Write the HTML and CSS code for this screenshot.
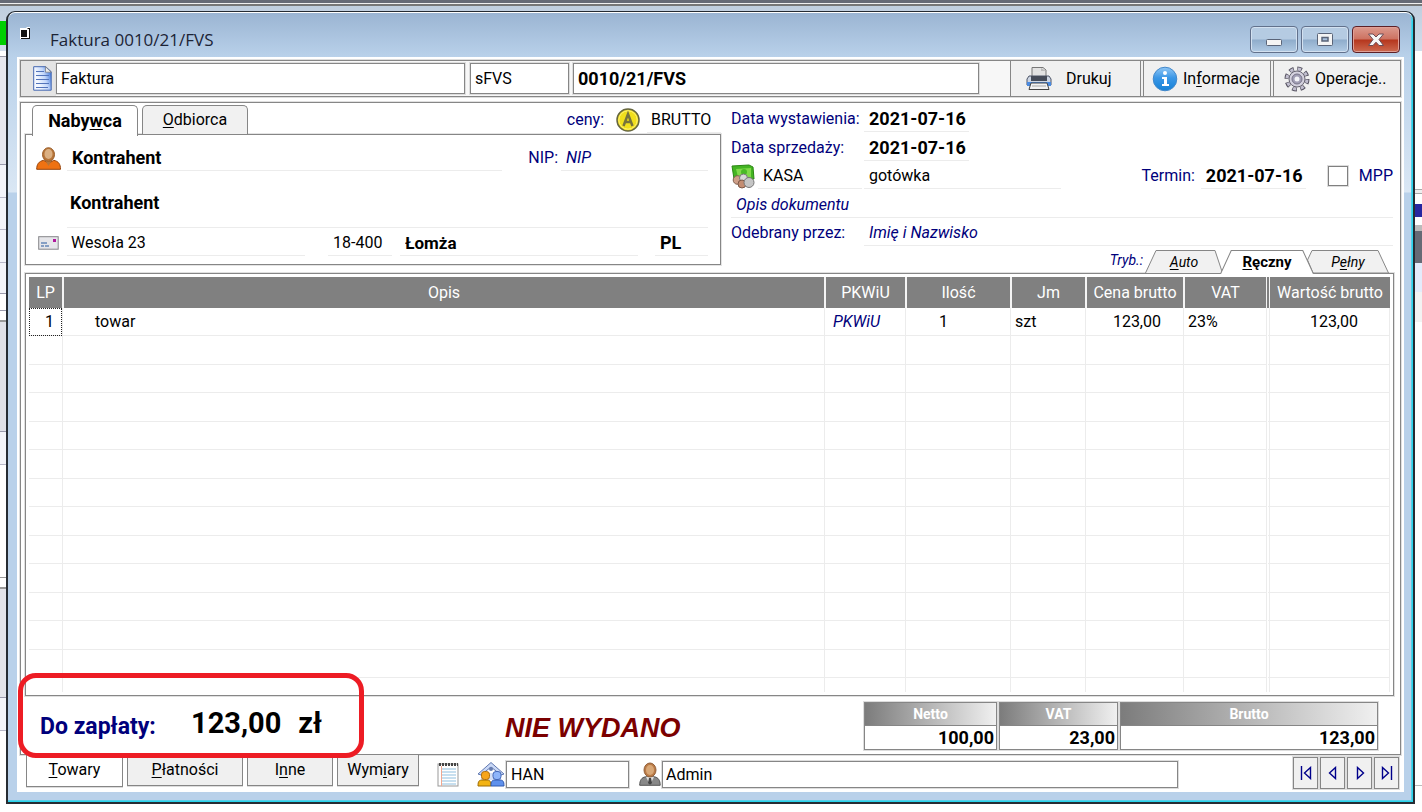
FILE: index.html
```html
<!DOCTYPE html>
<html lang="pl">
<head>
<meta charset="utf-8">
<title>Faktura 0010/21/FVS</title>
<link rel="stylesheet" href="styles.css">
</head>
<body>
<div class="desk-left"><span class="desk-badge"></span></div>
<div class="desk-right"></div>
<main class="window">
  <header class="titlebar">
    <svg class="app-icon" width="12" height="13" viewBox="0 0 12 13"><path d="M0 1h6l1-1h3v12H0z" fill="#fff"/><path d="M1 3h6v7H1zM8 2h1v9H1v1h9V1H7z" fill="#111"/></svg>
    <h1 class="title">Faktura 0010/21/FVS</h1>
    <div class="win-buttons">
      <button class="win-btn" aria-label="Minimalizuj"><svg width="18" height="14" viewBox="0 0 18 14"><rect x="1.5" y="6.500" width="15" height="6" rx="1" fill="#f4f4f4" stroke="#5a6478"/></svg></button>
      <button class="win-btn" aria-label="Maksymalizuj"><svg width="18" height="14" viewBox="0 0 18 14"><rect x="1.500" y=".5" width="15" height="12" rx="1" fill="#f4f4f4" stroke="#5a6478"/><rect x="6" y="4.500" width="6" height="3.500" fill="#a8c0dc" stroke="#5a6478" stroke-width="1.500"/></svg></button>
      <button class="win-btn close" aria-label="Zamknij"><svg width="18" height="14" viewBox="0 0 18 14"><path d="M1.500 1h4.500l3 3 3-3h4.500l-4.500 5.500 4.500 6H12l-3-3.300-3 3.300H1.500l4.500-6z" fill="#f6f6f6" stroke="#6b4b55"/></svg></button>
    </div>
  </header>

  <div class="client">
    <div class="toolbar">
      <span class="doc-icon"><svg width="19" height="25" viewBox="0 0 19 25"><defs><linearGradient id="doc" x1="0" x2="1" y1=".6" y2=".2"><stop offset=".2" stop-color="#f4f8ff"/><stop offset=".6" stop-color="#c3d7fa"/><stop offset="1" stop-color="#3a72d8"/></linearGradient></defs><path d="M.7.7h12l5.500 5v18.500H.7z" fill="url(#doc)" stroke="#4568b0"/><path d="M12.500.7v5.500h5.700z" fill="#eee" stroke="#777" stroke-width=".7"/><path d="M3 5.500h8M3 9.500h13M3 13.500h13M3 17.500h13M3 21.500h12" stroke="#5374ba"/></svg></span>
      <input class="box w-type" aria-label="Typ dokumentu" value="Faktura">
      <input class="box w-symbol" aria-label="Symbol" value="sFVS">
      <input class="box w-number bold" aria-label="Numer" value="0010/21/FVS">
      <span class="toolbar-gap"></span>
      <button class="tool"><svg width="26" height="25" viewBox="0 0 26 25"><path d="M6 11V1.500h11L20 4v7z" fill="#e2e2e2" stroke="#777"/><path d="M15 2v3h5" fill="#bbb"/><path d="M3 10h20l2 3v6H1v-6z" fill="#cdd5e2" stroke="#4d5568"/><path d="M5 10h16v5H5z" fill="#454b58"/><path d="M1 16h24v4H1z" fill="#4a8ae0"/><path d="M5 17h16l2 6.500H3z" fill="#f2f2f2" stroke="#444"/><path d="M6 20h14" stroke="#ccc" stroke-width="2"/></svg><span>Drukuj</span></button>
      <button class="tool tight"><svg width="26" height="26" viewBox="0 0 26 26"><defs><linearGradient id="inf" x2="0" y2="1"><stop offset="0" stop-color="#8fc6f5"/><stop offset=".45" stop-color="#3b97e6"/><stop offset="1" stop-color="#1581d6"/></linearGradient></defs><circle cx="13" cy="13" r="11.800" fill="url(#inf)" stroke="#4288cb"/><circle cx="13" cy="7" r="2" fill="#fff"/><path d="M10 11h5v7h2v2h-7v-2h2v-5h-2z" fill="#fff"/></svg><span>In<u>f</u>ormacje</span></button>
      <button class="tool tight"><svg width="26" height="26" viewBox="0 0 26 26"><circle cx="13" cy="13" r="10.500" fill="none" stroke="#555260" stroke-width="4" stroke-dasharray="4.700 3.550"/><circle cx="13" cy="13" r="10" fill="none" stroke="#c2bfd0" stroke-width="3" stroke-dasharray="3.100 4.750" stroke-dashoffset="-.7"/><circle cx="13" cy="13" r="8" fill="#d4d1de" stroke="#666370"/><circle cx="13" cy="13" r="5" fill="#a29fb5" stroke="#777489"/><circle cx="13" cy="13" r="2.500" fill="#f3f3f7"/></svg><span>Operacje..</span></button>
    </div>

    <section class="panel">
      <div class="top">
        <div class="buyer">
          <div class="buyer-head">
            <div class="tabs" role="tablist">
              <button class="tab active" role="tab" aria-selected="true">Naby<u>w</u>ca</button>
              <button class="tab" role="tab"><u>O</u>dbiorca</button>
            </div>
            <label class="lbl" for="ceny">ceny:</label>
            <svg class="coin" width="24" height="24" viewBox="0 0 24 24"><circle cx="12" cy="12" r="11" fill="#f1df1c" stroke="#666640" stroke-width="1.500"/><circle cx="12" cy="12" r="9.200" fill="none" stroke="#fff27a"/><path d="M7.500 18 12 6l4.500 12M9 14h6" fill="none" stroke="#77733c" stroke-width="2.500"/></svg>
            <input class="line w-ceny" id="ceny" value="BRUTTO">
          </div>
          <div class="buyer-box">
            <div class="brow first">
              <span class="ico"><svg width="25" height="23" viewBox="0 0 25 23"><path d="M.7 22.300c0-5 2-8 7-9l5 3 5-3c5 1 6.800 4 6.800 9z" fill="#ef7212" stroke="#97440c"/><path d="m9 13 3.500 6 3.500-6z" fill="#b5763a"/><ellipse cx="12.500" cy="7.500" rx="6" ry="6.800" fill="#b8763a" stroke="#9b5d28"/><ellipse cx="12.500" cy="7" rx="4" ry="5" fill="#dbb083"/></svg></span>
              <input class="line grow bold" aria-label="Skrót" value="Kontrahent">
              <label class="lbl nip" for="nip">NIP:</label>
              <input class="line w-nip" id="nip" placeholder="NIP">
            </div>
            <div class="brow second"><input class="line grow bold" aria-label="Nazwa" value="Kontrahent"></div>
            <div class="brow third">
              <span class="ico"><svg width="21" height="14" viewBox="0 0 21 14"><rect x=".7" y=".7" width="19.500" height="12.500" fill="#e6e6ea" stroke="#858589"/><path d="M3 7h6M3 10h3M7 10h4" stroke="#6788b8" stroke-width="1.500"/><path d="M15 3h3v3h-3z" fill="#b0189c"/></svg></span>
              <input class="line w-street" aria-label="Ulica" value="Wesoła 23">
              <input class="line w-zip" aria-label="Kod" value="18-400">
              <input class="line grow bold small" aria-label="Miasto" value="Łomża">
              <input class="line w-country bold" aria-label="Kraj" value="PL">
            </div>
          </div>
        </div>

        <div class="details">
          <div class="drow"><label class="lbl w-label" for="d1">Data wystawienia:</label><input class="line w-date bold" id="d1" value="2021-07-16"></div>
          <div class="drow"><label class="lbl w-label" for="d2">Data sprzedaży:</label><input class="line w-date bold" id="d2" value="2021-07-16"></div>
          <div class="drow">
            <svg class="cash" width="24" height="25" viewBox="0 0 24 25"><path d="m1 2 17-1 4 2 1 12H3z" fill="#43b522" stroke="#2b8713"/><path d="m5 5 15-1v9H7z" fill="#81da4a"/><circle cx="13" cy="8" r="3" fill="#4aba27"/><circle cx="6.500" cy="16" r="4.300" fill="#cf9f88" stroke="#80604f"/><circle cx="12.500" cy="14" r="4" fill="#d9d9d9" stroke="#777"/><circle cx="11" cy="20" r="4" fill="#c48d72" stroke="#7c5947"/><circle cx="18" cy="18.500" r="5" fill="#c5c5c5" stroke="#777"/></svg>
            <input class="line w-kasa" aria-label="Kasa" value="KASA">
            <input class="line w-pay" aria-label="Forma płatności" value="gotówka">
            <label class="lbl term" for="d3">Termin:</label><input class="line w-date bold" id="d3" value="2021-07-16">
            <label class="lbl mpp"><input type="checkbox" class="check">MPP</label>
          </div>
          <div class="drow"><input class="line grow" aria-label="Opis dokumentu" placeholder="Opis dokumentu"></div>
          <div class="drow"><label class="lbl w-label" for="rec">Odebrany przez:</label><input class="line grow" id="rec" placeholder="Imię i Nazwisko"></div>
          <div class="modes" role="tablist">
            <span class="mode-label">Tryb.:</span>
            <button class="mode m-auto" role="tab"><svg class="shape" viewBox="0 0 78 23" preserveAspectRatio="none"><path d="M.5 23 11 .5h59L77.500 23"/></svg><span><u>A</u>uto</span></button>
            <button class="mode m-hand active" role="tab" aria-selected="true"><svg class="shape" viewBox="0 0 92 24" preserveAspectRatio="none"><path d="M.5 24 11 .5h70L91.500 24"/></svg><span><u>R</u>ęczny</span></button>
            <button class="mode m-full" role="tab"><svg class="shape" viewBox="0 0 82 23" preserveAspectRatio="none"><path d="M.5 10 5 .5h66L81.500 23H6z"/></svg><span>P<u>e</u>łny</span></button>
          </div>
        </div>
      </div>

      <div class="grid-box">
        <table class="grid">
          <colgroup><col class="c-lp"><col><col class="c-pk"><col class="c-il"><col class="c-jm"><col class="c-ce"><col class="c-va"><col class="c-wa"></colgroup>
          <thead><tr><th>LP</th><th>Opis</th><th>PKWiU</th><th>Ilość</th><th>Jm</th><th>Cena brutto</th><th>VAT</th><th>Wartość brutto</th></tr></thead>
          <tbody>
            <tr><td class="focus">1</td><td class="desc">towar</td><td class="pk">PKWiU</td><td class="qty">1</td><td>szt</td><td class="num">123,00</td><td>23%</td><td class="num last">123,00</td></tr>
            <tr><td></td><td></td><td></td><td></td><td></td><td></td><td></td><td></td></tr>
            <tr><td></td><td></td><td></td><td></td><td></td><td></td><td></td><td></td></tr>
            <tr><td></td><td></td><td></td><td></td><td></td><td></td><td></td><td></td></tr>
            <tr><td></td><td></td><td></td><td></td><td></td><td></td><td></td><td></td></tr>
            <tr><td></td><td></td><td></td><td></td><td></td><td></td><td></td><td></td></tr>
            <tr><td></td><td></td><td></td><td></td><td></td><td></td><td></td><td></td></tr>
            <tr><td></td><td></td><td></td><td></td><td></td><td></td><td></td><td></td></tr>
            <tr><td></td><td></td><td></td><td></td><td></td><td></td><td></td><td></td></tr>
            <tr><td></td><td></td><td></td><td></td><td></td><td></td><td></td><td></td></tr>
            <tr><td></td><td></td><td></td><td></td><td></td><td></td><td></td><td></td></tr>
            <tr><td></td><td></td><td></td><td></td><td></td><td></td><td></td><td></td></tr>
            <tr><td></td><td></td><td></td><td></td><td></td><td></td><td></td><td></td></tr>
            <tr class="rest"><td></td><td></td><td></td><td></td><td></td><td></td><td></td><td></td></tr>
          </tbody>
        </table>
      </div>

      <div class="summary">
        <span class="due-label">Do zapłaty:</span>
        <span class="due">123,00</span><span class="due cur">zł</span>
        <span class="status">NIE WYDANO</span>
        <dl class="totals">
          <div class="total t-net"><dt>Netto</dt><dd>100,00</dd></div>
          <div class="total t-vat"><dt>VAT</dt><dd>23,00</dd></div>
          <div class="total t-gross"><dt>Brutto</dt><dd>123,00</dd></div>
        </dl>
        <span class="marker"></span>
      </div>
    </section>

    <footer class="bottom">
      <button class="btab b1 active"><u>T</u>owary</button>
      <button class="btab b2"><u>P</u>łatności</button>
      <button class="btab b3">I<u>n</u>ne</button>
      <button class="btab b4">Wym<u>i</u>ary</button>
      <svg class="note" width="22" height="25" viewBox="0 0 22 25"><rect x="1" y="2" width="20" height="22" fill="#fff" stroke="#999"/><path d="M2 2.500h19" stroke="#444" stroke-width="3" stroke-dasharray="2 1"/><path d="M5 7h14M5 10h14M5 13h14M5 16h14M5 19h14M5 22h14" stroke="#b5d5ea" stroke-width="1.500"/><path d="M4.500 4v20" stroke="#f1a78f"/></svg>
      <svg class="house" width="28" height="26" viewBox="0 0 28 26"><path d="M4 12v7h20v-7" fill="#d5dff5"/><path d="m1 13 13-11.500L27 13l-3 1L14 6 4 14z" fill="#c9d8f6" stroke="#6078b0"/><circle cx="14" cy="8" r="2" fill="#667db0"/><path d="M1 25c0-5 1-6 5-6h3c4 0 5 1 5 6z" fill="#f3b313" stroke="#9d6c05"/><rect x="4.500" y="10.500" width="8" height="8" rx="3" fill="#f6a51b" stroke="#ae6e0d"/><path d="M14 25c0-5 1-6 5-6h3c4 0 5 1 5 6z" fill="#5e90ec" stroke="#315ab0"/><rect x="16" y="10.500" width="8" height="8" rx="3" fill="#8eb5fa" stroke="#4468b8"/></svg>
      <input class="box w-han" aria-label="Magazyn" value="HAN">
      <svg class="user" width="22" height="24" viewBox="0 0 22 24"><path d="M.7 23.300c0-5 2-8 6-8.500h8.500c4 .5 6 3.500 6 8.500z" fill="#888" stroke="#555"/><path d="m7 15 4 8 4-8z" fill="#ddd"/><path d="m10 16h2l1 5-2 2-2-2z" fill="#444"/><ellipse cx="11" cy="8" rx="6" ry="7" fill="#ba7b47" stroke="#936039"/><ellipse cx="11" cy="8" rx="4" ry="5" fill="#d9a877"/></svg>
      <input class="box w-admin" aria-label="Operator" value="Admin">
      <div class="nav">
        <button class="nav-btn" aria-label="Pierwszy"><svg width="12" height="14" viewBox="0 0 12 14"><path d="M1.500 0v14M10.500 1.500v11L4.500 7z"/></svg></button>
        <button class="nav-btn" aria-label="Poprzedni"><svg width="12" height="14" viewBox="0 0 12 14"><path d="M8.500 1.500v11L2.500 7z"/></svg></button>
        <button class="nav-btn" aria-label="Następny"><svg width="12" height="14" viewBox="0 0 12 14"><path d="M3.500 1.500v11l6-5.500z"/></svg></button>
        <button class="nav-btn" aria-label="Ostatni"><svg width="12" height="14" viewBox="0 0 12 14"><path d="M10.500 0v14M1.500 1.500v11l6-5.500z"/></svg></button>
      </div>
    </footer>
  </div>
</main>
</body>
</html>
```

FILE: styles.css
```css
* { box-sizing: border-box; }
:root { --navy: #00007b; --edge: #868686; --rule: #ececec; }
body {
  margin: 0;
  min-height: 100vh;
  padding: 11px 7px 9px 6px;
  display: flex;
  position: relative;
  font: 16px/20px Roboto, "Liberation Sans", sans-serif;
  color: #000;
  background: linear-gradient(#666a75 0 3px, #f0f0f0 3px 4px, #777 4px 6px, #c0cede 6px, #d2deec 51px, #fff 51px 100%);
}
button, input { font: inherit; color: inherit; margin: 0; padding: 0; }
u { text-underline-offset: 2px; }

/* Neighbouring windows visible around the frame */
.desk-left {
  position: absolute; left: 0; top: 56px; bottom: 0; width: 8px;
  background: linear-gradient(#9a9aa8 0 1px, #e6e7ee 1px 108px, #9a9aac 108px 109px, #f3f4f9 109px 141px, #b8b8c8 141px 142px, #f3f4f9 142px 173px, #b8b8c8 173px 174px, #f3f4f9 174px 206px, #b8b8c8 206px 207px, #f3f4f9 207px 237px, #9a9aac 237px 238px, #fff 238px 254px, #9a9aac 254px 255px, #fff 255px 264px, #999 264px 266px, #e0e1e8 266px 375px, #9a9aac 375px 376px, #f3f4f9 376px 408px, #b8b8c8 408px 409px, #fff 409px 521px, #999 521px 522px, #fff 522px 531px, #999 531px 533px, #e3e4ea 533px 641px, #9a9aac 641px 642px, #f3f4f9 642px 674px, #b8b8c8 674px 675px, #fff 675px);
}
.desk-badge { position: absolute; left: 0; top: -35px; width: 6px; height: 24px; background: #00d000; }
.desk-right {
  position: absolute; right: 0; top: 189px; bottom: 0; width: 8px;
  background: linear-gradient(#aaa 0 1px, #eee 1px 4px, #aaa 4px 5px, #fff 5px 15px, #2727a0 15px 28px, #fff 28px 36px, #bbb 36px 42px, #666a75 42px 74px, #e4ecfb 74px 103px, #f3f3f3 103px 133px, #fff 133px 596px, #bbb 596px 597px, #fff 597px);
}

.window {
  position: relative;
  flex: 1;
  display: flex;
  flex-direction: column;
  padding: 0 9px 10px;
  border: 2px solid #262c33;
  border-top-width: 1px;
  border-radius: 9px 9px 0 0;
  box-shadow: inset 0 1px #fff, inset -1px -1px #28d4ec, inset -2px -2px #55cfe8;
  background: linear-gradient(#9ab4d2 0, #b9d1ea 45px, #dae7f4 180px, #b9d1ea 181px);
}
.titlebar { height: 45px; display: flex; align-items: flex-start; }
.app-icon { margin: 15px 0 0 3px; }
.title { margin: 17px auto 0 18px; font: 17px/22px "Open Sans", "Noto Sans", sans-serif; color: #1c2436; }
.win-buttons { display: flex; gap: 3px; padding: 14px 4px 0 0; }
.win-btn {
  width: 48px; height: 27px; display: grid; place-items: center;
  border: 1px solid #62718c; border-radius: 4px;
  box-shadow: inset 0 0 0 1px #d3e1f0;
  background: linear-gradient(#b5cbe2 0 48%, #8faccb 52%, #b1cae4);
}
.win-btn.close { border-color: #5d2026; box-shadow: inset 0 0 0 1px #e0a096; background: linear-gradient(#dc9a8e 0, #cd7261 48%, #b5361d 52%, #cd6a50); }

.client { flex: 1; display: flex; flex-direction: column; padding: 3px 3px 2px; background: #fff; }

.toolbar { display: flex; height: 37px; border: 1px solid var(--edge); box-shadow: 0 0 0 1px #ddd; background: #f7f7f7; }
.doc-icon { width: 35px; display: grid; place-items: center; padding-left: 8px; background: #e4e4e4; }
.box { height: 31px; padding: 0 4px; border: 1px solid var(--edge); background: #fff; box-shadow: 0 0 0 1px #ddd; min-width: 0; }
.toolbar .box { margin: 2px 0; }
.w-type { flex: 409 1 409px; }
.toolbar .w-symbol { flex: 0 1 99px; margin-left: 5px; }
.toolbar .w-number { flex: 406 1 406px; margin-left: 4px; }
.bold { font-weight: 700; font-size: 18px; }
.toolbar-gap { width: 31px; }
.tool { width: 130px; display: flex; align-items: center; gap: 14px; padding: 0 0 0 15px; border: 0; border-left: 1px solid var(--edge); background: #f0f0f0; }
.tool.tight { gap: 5px; padding-left: 8px; border-left: 4px double var(--edge); width: 130px; }
.tool.tight + .tight { padding-left: 10px; }

.panel { flex: 1; display: flex; flex-direction: column; margin-top: 5px; border: 1px solid var(--edge); box-shadow: 0 0 0 1px #e0e0e0; }
.top { display: flex; gap: 8px; padding: 2px 0 0 4px; }
.buyer { flex: 0 1 696px; }
.buyer-head { display: flex; align-items: center; height: 29px; padding-left: 7px; }
.tabs { display: flex; gap: 4px; align-self: stretch; margin-right: auto; }
.tab { width: 106px; height: 29px; border: 1px solid var(--edge); border-bottom: 0; border-radius: 5px 5px 0 0; background: #f1f1f1; }
.tab.active { height: 31px; background: #fff; font-weight: 700; font-size: 18px; position: relative; z-index: 1; }
.lbl { color: var(--navy); white-space: nowrap; }
.coin { margin: 0 7px 0 12px; }
.line { min-width: 0; height: 26px; padding: 0 5px; border: 0; border-bottom: 1px solid var(--rule); background: transparent; }
.line::placeholder { color: var(--navy); opacity: 1; font-style: italic; }
.buyer-head .w-ceny { width: 74px; padding: 0 4px; }
.buyer-box { border: 1px solid var(--edge); box-shadow: 0 0 0 1px #e4e4e4; height: 131px; padding: 10px 12px 0 10px; }
.brow { display: flex; align-items: center; }
.ico { width: 31px; display: flex; }
.grow { flex: 1; }
.nip { margin: 0 3px 0 26px; }
.w-nip { width: 147px; }
.second { margin-top: 7px; padding-left: 31px; }
.second .line { height: 50px; padding: 0 3px; }
.third { margin-top: 2px; gap: 8px; }
.third .ico { width: 31px; margin-right: -8px; padding-left: 2px; }
.third .w-street { width: 238px; margin-right: 15px; padding-left: 4px; }
.w-zip { width: 64px; }
.w-country { width: 53px; margin-left: 9px; }
.small { font-size: 17px; }

.details { flex: 1; display: flex; flex-direction: column; padding-right: 7px; }
.drow { display: flex; align-items: center; height: 28px; padding-left: 2px; }
.drow:nth-child(even) { height: 29px; }
.w-label { width: 133px; }
.line.w-date { width: 105px; padding-right: 0; }
.cash { margin-right: 3px; }
.w-kasa { width: 104px; margin-right: 2px; }
.w-pay { width: 197px; }
.term { margin: 0 6px 0 auto; }
.mpp { display: flex; align-items: center; gap: 11px; margin-left: 22px; }
.check { appearance: none; width: 20px; height: 20px; border: 1px solid #808080; background: #fff; box-shadow: 0 0 0 1px #ddd; }
.modes { display: flex; align-items: flex-end; justify-content: flex-end; height: 25px; margin-top: 1px; padding-right: 4px; font-style: italic; font-size: 14px; line-height: 18px; }
.mode-label { color: var(--navy); padding: 0 2px 4px 0; }
.mode { position: relative; height: 23px; border: 0; background: none; padding: 0; }
.mode span { position: relative; }
.shape { position: absolute; inset: 0; width: 100%; height: 100%; fill: #f1f1f1; stroke: var(--edge); }
.m-auto { width: 78px; }
.m-hand { width: 94px; height: 24px; margin: 0 -7px -1px -3px; z-index: 1; font-weight: 700; font-style: normal; font-size: 15px; }
.m-hand .shape { fill: #fff; }
.m-full { width: 82px; }

.grid-box { flex: 1; display: flex; flex-direction: column; margin: 0 6px 0 4px; padding: 3px; border: 1px solid var(--edge); box-shadow: 0 0 0 1px #e0e0e0; }
.grid { flex: 1; width: 100%; border-collapse: separate; border-spacing: 0; table-layout: fixed; }
.c-lp { width: 33px; } .c-pk { width: 81px; } .c-il { width: 105px; } .c-jm { width: 75px; } .c-ce { width: 98px; } .c-va { width: 83px; } .c-wa { width: 124px; }
.grid th { height: 31px; padding: 0; font-weight: 400; color: #fff; background: #808080; border-left: 2px solid #f4f4f4; white-space: nowrap; }
.grid th:first-child { border-left: 0; }
.grid th:last-child { border-left: 4px double #f4f4f4; }
.grid td { height: 28px; padding: 0 4px; border-bottom: 1px solid var(--rule); border-left: 1px solid var(--rule); }
.grid tr:nth-child(even) td { height: 29px; }
.grid td:first-child { border-left: 0; }
.grid td:last-child { border-left: 4px double var(--rule); border-right: 1px solid var(--rule); }
.grid tr.rest:nth-child(even) td { height: 14px; border-bottom: 0; }
.grid .focus { outline: 1px dotted #222; outline-offset: -1px; text-align: right; padding-right: 8px; }
.grid .desc { padding-left: 32px; }
.grid .pk { color: var(--navy); font-style: italic; padding-left: 8px; }
.grid .qty { padding-left: 33px; }
.grid .num { text-align: right; padding-right: 22px; }
.grid .last { padding-right: 31px; }

.summary { position: relative; display: flex; align-items: center; height: 58px; padding: 0 22px 0 19px; }
.due-label { width: 151px; color: var(--navy); font-weight: 700; font-size: 23px; padding-top: 4px; }
.due { font-weight: 700; font-size: 29px; margin-bottom: 4px; }
.cur { margin-left: 17px; }
.status { margin: 6px auto 0 183px; color: #7b0000; font: italic 700 27px/30px "Liberation Sans", sans-serif; }
.totals { display: flex; gap: 2px; margin: 2px 0 0; }
.total { border: 1px solid var(--edge); box-shadow: 0 0 0 1px #ddd; }
.total dt { height: 23px; line-height: 22px; text-align: center; color: #fff; font-weight: 700; font-size: 14px; background: linear-gradient(90deg, #7c7c7c, #f0f0f0); border-bottom: 1px solid var(--edge); }
.total dd { margin: 0; height: 23px; line-height: 24px; padding-right: 2px; text-align: right; font-weight: 700; font-size: 18px; }
.t-net { width: 133px; } .t-vat { width: 119px; } .t-gross { width: 258px; }
.marker { position: absolute; left: -3px; top: -23px; width: 346px; height: 85px; border: 5px solid #ed1c24; border-radius: 18px; }

.bottom { display: flex; height: 35px; padding: 0 2px 0 6px; }
.btab { height: 31px; padding-bottom: 1px; margin-right: 4px; border: 1px solid var(--edge); border-top: 0; background: #f0f0f0; box-shadow: 0 1px #ddd; }
.btab.active { height: 32px; background: #fff; }
.b1 { width: 97px; } .b2 { width: 116px; } .b3 { width: 86px; } .b4 { width: 82px; }
.note { margin: 7px 18px 0 14px; }
.house { margin: 6px 1px 0 0; }
.bottom .box { height: 27px; margin-top: 6px; }
.w-han { width: 123px; }
.user { margin: 7px 1px 0 10px; }
.bottom .w-admin { flex: 0 1 516px; padding-left: 3px; }
.nav { display: flex; gap: 2px; margin: 2px 0 0 auto; }
.nav-btn { width: 25px; height: 32px; display: grid; place-items: center; border: 1px solid var(--edge); background: #f0f0f0; box-shadow: 0 0 0 1px #ddd; }
.nav-btn path { fill: none; stroke: #00008b; stroke-width: 1.4; }
```
